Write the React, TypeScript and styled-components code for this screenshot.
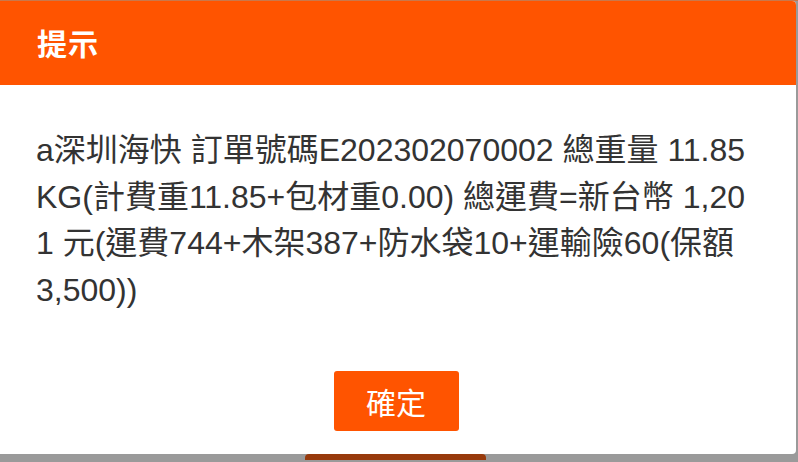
import React from 'react'
import styled, { createGlobalStyle } from 'styled-components'

const GlobalStyle = createGlobalStyle`
    html, body {
        margin: 0;
        padding: 0;
        background: #9a9a9a;
    }

    body {
        width: 798px;
        height: 462px;
        overflow: hidden;
        font-family: "Liberation Sans", "Noto Sans CJK TC", sans-serif;
    }
`

const Backdrop = styled.div`
    width: 798px;
    height: 462px;
    border-top: 1px solid #c9784c;
    box-sizing: border-box;
    display: flex;
    flex-direction: column;
    overflow: hidden;
`

const Dialog = styled.div`
    width: 796px;
    height: 453px;
    background: #ffffff;
    border-radius: 0 4px 4px 0;
    display: flex;
    flex-direction: column;
    overflow: hidden;
    flex-shrink: 0;
`

const Header = styled.div`
    height: 84px;
    background: #ff5400;
    display: flex;
    align-items: center;
    padding: 0 37px 2px;
    box-sizing: border-box;

    h2 {
        margin: 0;
        color: #ffffff;
        font-size: 30px;
        font-weight: 700;
        letter-spacing: 1px;
    }
`

const Body = styled.div`
    flex: 1;
    display: flex;
    flex-direction: column;
    padding: 42px 47px 23px 36px;
    box-sizing: border-box;
`

const Message = styled.p`
    margin: 0;
    flex: 1;
    color: #333333;
    font-size: 32px;
    line-height: 46.5px;
    word-break: break-all;
`

const Actions = styled.div`
    display: flex;
    justify-content: center;
    padding-left: 7px;
`

const ConfirmButton = styled.button`
    width: 125px;
    height: 60px;
    border: none;
    border-radius: 3px;
    background: #ff5400;
    color: #ffffff;
    font-family: "Liberation Sans", "Noto Sans CJK TC", sans-serif;
    font-size: 30px;
    cursor: pointer;
`

const Underlay = styled.div`
    display: flex;
    justify-content: center;
    padding-right: 8px;

    span {
        width: 181px;
        height: 6px;
        background: #983a0c;
        border-radius: 4px 4px 0 0;
    }
`

const App: React.FC = () => {
    return <>
        <GlobalStyle />
        <Backdrop>
            <Dialog>
                <Header>
                    <h2>提示</h2>
                </Header>
                <Body>
                    <Message>
                        a深圳海快 訂單號碼E202302070002 總重量 11.85 KG(計費重11.85+包材重0.00) 總運費=新台幣 1,201 元(運費744+木架387+防水袋10+運輸險60(保額3,500))
                    </Message>
                    <Actions>
                        <ConfirmButton>確定</ConfirmButton>
                    </Actions>
                </Body>
            </Dialog>
            <Underlay>
                <span />
            </Underlay>
        </Backdrop>
    </>
}

export default App
